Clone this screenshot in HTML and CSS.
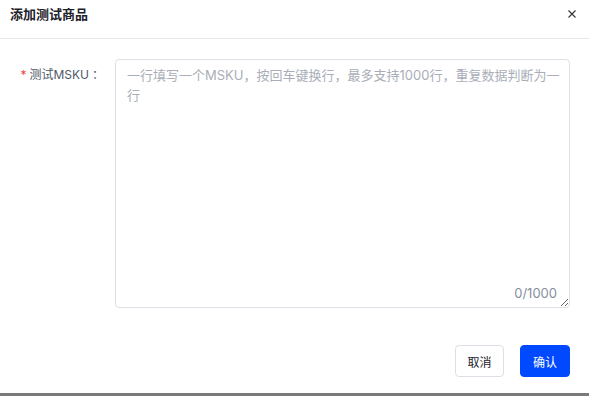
FILE: index.html
```html
<!DOCTYPE html>
<html lang="zh-CN">
<head>
  <meta charset="UTF-8" />
  <title>添加测试商品</title>
  <link rel="stylesheet" href="styles.css">
</head>
<body>
  <div class="dialog">
    <!-- 标题栏 -->
    <div class="dialog-header">
      <span class="dialog-title">添加测试商品</span>
      <span class="close-btn">
        <svg width="8" height="8" viewBox="0 0 8 8">
          <path d="M0.5 0.5 L7.5 7.5 M7.5 0.5 L0.5 7.5" stroke="#333" stroke-width="1.1" fill="none" />
        </svg>
      </span>
    </div>

    <!-- 表单 -->
    <div class="dialog-body">
      <div class="form-row">
        <label class="form-label"><span class="required">*</span>测试MSKU<span class="colon">：</span></label>
        <div class="textarea-wrap">
          <textarea class="msku-input" placeholder="一行填写一个MSKU，按回车键换行，最多支持1000行，重复数据判断为一行"></textarea>
          <span class="word-count">0/1000</span>
        </div>
      </div>
    </div>

    <div class="dialog-footer">
      <button class="btn btn-default">取消</button>
      <button class="btn btn-primary">确认</button>
    </div>
  </div>
  <div class="bottom-bar"></div>
</body>
</html>
```

FILE: styles.css
```css
* {
  box-sizing: border-box;
}

html, body {
  margin: 0;
  padding: 0;
  height: 100%;
  background: #fff;
  font-family: Inter, "Noto Sans CJK SC", sans-serif;
  color: #1d2129;
  overflow: hidden;
}

body {
  display: flex;
  flex-direction: column;
}

.dialog {
  flex: 1;
  display: flex;
  flex-direction: column;
}

.dialog-header {
  height: 39px;
  padding: 5px 13px 0 10px;
  display: flex;
  justify-content: space-between;
  align-items: flex-start;
  border-bottom: 1px solid #e5e6eb;
}

.dialog-title {
  font-size: 13px;
  font-weight: 700;
  line-height: 18px;
  color: #1d2129;
}

.close-btn {
  display: flex;
  align-items: center;
  height: 18px;
  cursor: pointer;
}

.dialog-body {
  padding: 20px 19px 0 20px;
}

.form-row {
  display: flex;
  align-items: flex-start;
}

.form-label {
  width: 84px;
  margin-right: 11px;
  padding-top: 6px;
  font-size: 12px;
  line-height: 18px;
  color: #4e5969;
  text-align: right;
  white-space: nowrap;
}

.required {
  color: #f53f3f;
  margin-right: 3px;
}

.colon {
  font-family: "Noto Sans CJK SC", sans-serif;
  margin-left: 3px;
}

.textarea-wrap {
  position: relative;
  flex: 1;
}

.msku-input {
  display: block;
  width: 100%;
  height: 249px;
  padding: 5px 6px 5px 11px;
  border: 1px solid #dcdfe6;
  border-radius: 4px;
  font-family: Inter, "Noto Sans CJK SC", sans-serif;
  font-size: 13px;
  line-height: 20px;
  color: #1d2129;
  resize: vertical;
  outline: none;
}

.msku-input::placeholder {
  color: #a9aeb8;
}

.word-count {
  position: absolute;
  right: 13px;
  bottom: 6px;
  font-size: 13px;
  line-height: 18px;
  color: #86909c;
}

.dialog-footer {
  display: flex;
  justify-content: flex-end;
  gap: 16px;
  padding: 37px 19px 0 0;
}

.btn {
  height: 32px;
  padding: 0;
  border-radius: 4px;
  font-family: Inter, "Noto Sans CJK SC", sans-serif;
  font-size: 12px;
  white-space: nowrap;
  cursor: pointer;
}

.btn-default {
  width: 49px;
  background: #fff;
  border: 1px solid #dcdfe6;
  color: #1d2129;
}

.btn-primary {
  width: 50px;
  background: #0049ff;
  border: 1px solid #0049ff;
  color: #fff;
}

.bottom-bar {
  height: 3px;
  background: #7a7a7a;
}
```
